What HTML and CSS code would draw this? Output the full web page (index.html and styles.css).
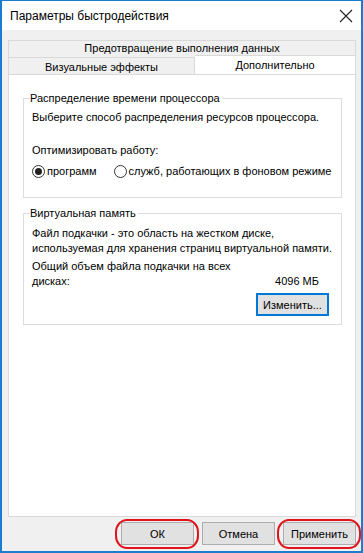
FILE: index.html
```html
<!DOCTYPE html>
<html lang="ru">
<head>
<meta charset="utf-8">
<title>Параметры быстродействия</title>
<link rel="stylesheet" href="styles.css">
</head>
<body>
<div class="window">
  <div class="titlebar">
    <span class="title">Параметры быстродействия</span>
    <svg class="close" width="14" height="14" viewBox="0 0 14 14"><path d="M1 1L13 13M13 1L1 13" stroke="#222" stroke-width="1.1" fill="none"/></svg>
  </div>
  <div class="content">
    <div class="tabs">
      <div class="tab-row">
        <div class="tab tab-full">Предотвращение выполнения данных</div>
      </div>
      <div class="tab-row">
        <div class="tab tab-left">Визуальные эффекты</div>
        <div class="tab tab-active">Дополнительно</div>
      </div>
    </div>
    <div class="panel">
      <fieldset class="group group-cpu">
        <legend>Распределение времени процессора</legend>
        <p class="line">Выберите способ распределения ресурсов процессора.</p>
        <p class="line line-opt">Оптимизировать работу:</p>
        <div class="radios">
          <label class="radio"><span class="dot checked"></span>программ</label>
          <label class="radio radio-2"><span class="dot"></span>служб, работающих в фоновом режиме</label>
        </div>
      </fieldset>
      <fieldset class="group group-vm">
        <legend>Виртуальная память</legend>
        <p class="line">Файл подкачки - это область на жестком диске,<br>используемая для хранения страниц виртуальной памяти.</p>
        <div class="total">
          <span>Общий объем файла подкачки на всех<br>дисках:</span>
          <span class="size">4096 МБ</span>
        </div>
        <div class="change-row">
          <button class="btn btn-focus">Изменить...</button>
        </div>
      </fieldset>
    </div>
    <div class="buttons">
      <div class="mark"><button class="btn">ОК</button></div>
      <button class="btn">Отмена</button>
      <div class="mark"><button class="btn">Применить</button></div>
    </div>
  </div>
</div>
</body>
</html>
```
FILE: styles.css
```css
* { box-sizing: border-box; }
html, body { margin: 0; padding: 0; }
body {
  width: 363px;
  height: 553px;
  font-family: "Liberation Sans", Arial, sans-serif;
  font-size: 11px;
  color: #000;
  background: #fff;
}
.window {
  width: 363px;
  height: 553px;
  border: 2px solid #1c7cd0;
  border-top-width: 1px;
  display: flex;
  flex-direction: column;
}
.titlebar {
  height: 29px;
  background: #fff;
  display: flex;
  align-items: center;
  justify-content: space-between;
  padding: 0 8px 0 8px;
  flex: none;
}
.title { font-size: 12px; color: #000; }
.close { margin-top: 1px; }
.content {
  flex: 1;
  background: #f0f0f0;
  padding: 10px 5px 6px 6px;
  display: flex;
  flex-direction: column;
}
.tabs { display: flex; flex-direction: column; }
.tab-row { display: flex; height: 17px; }
.tab {
  border: 1px solid #d9d9d9;
  background: #f0f0f0;
  text-align: center;
  line-height: 15px;
  white-space: nowrap;
}
.tab-full { flex: 1; border-bottom: none; }
.tab-left { width: 187px; border-bottom: none; padding-top: 2px; }
.tab-active {
  flex: 1;
  background: #fff;
  border-left: none;
  border-bottom: none;
  height: 19px;
  margin-top: -2px;
  position: relative;
  z-index: 1;
  padding-top: 2px;
}
.panel {
  flex: 1;
  background: #fff;
  border: 1px solid #d9d9d9;
  margin-top: 0;
  padding: 15px 13px 0 14px;
}
.group {
  margin: 0;
  border: 1px solid #dcdcdc;
  padding: 0 8px 0 8px;
  min-width: 0;
}
.group legend {
  padding: 0 2px 0 0;
  margin-left: -2px;
  line-height: 16px;
}
.line { margin: 4px 0 0 0; line-height: 15px; white-space: nowrap; }
.line-opt { margin-top: 18px; }
.radios { display: flex; margin-top: 5px; margin-bottom: 18px; height: 16px; align-items: center; }
.radio { display: flex; align-items: center; white-space: nowrap; }
.radio-2 { margin-left: 17px; }
.dot {
  width: 13px;
  height: 13px;
  border: 1px solid #333;
  border-radius: 50%;
  margin-right: 2px;
  display: inline-flex;
  align-items: center;
  justify-content: center;
  background: #fff;
}
.dot.checked::after {
  content: "";
  width: 7px;
  height: 7px;
  border-radius: 50%;
  background: #222;
}
.group-vm { margin-top: 7px; }
.group-vm .line { margin-top: 5px; }
.total {
  display: flex;
  justify-content: space-between;
  align-items: flex-end;
  line-height: 15px;
  margin-top: 3px;
  white-space: nowrap;
}
.size { padding-right: 14px; }
.change-row { display: flex; justify-content: flex-end; margin-top: 4px; margin-bottom: 8px; margin-right: 4px; }
.btn {
  font-family: inherit;
  font-size: 11px;
  height: 23px;
  width: 73px;
  padding: 0;
  background: #e1e1e1;
  border: 1px solid #adadad;
  color: #000;
  white-space: nowrap;
}
.btn-focus { border: 2px solid #0078d7; width: 73px; }
.buttons {
  display: flex;
  justify-content: flex-end;
  gap: 8px;
  margin-top: 5px;
  padding-right: 0;
}
.mark { position: relative; display: flex; }
.mark::after {
  content: "";
  position: absolute;
  left: -6px;
  right: -5px;
  top: -3px;
  bottom: -4px;
  border: 2px solid #e0141c;
  border-radius: 12px / 13px;
}
```
